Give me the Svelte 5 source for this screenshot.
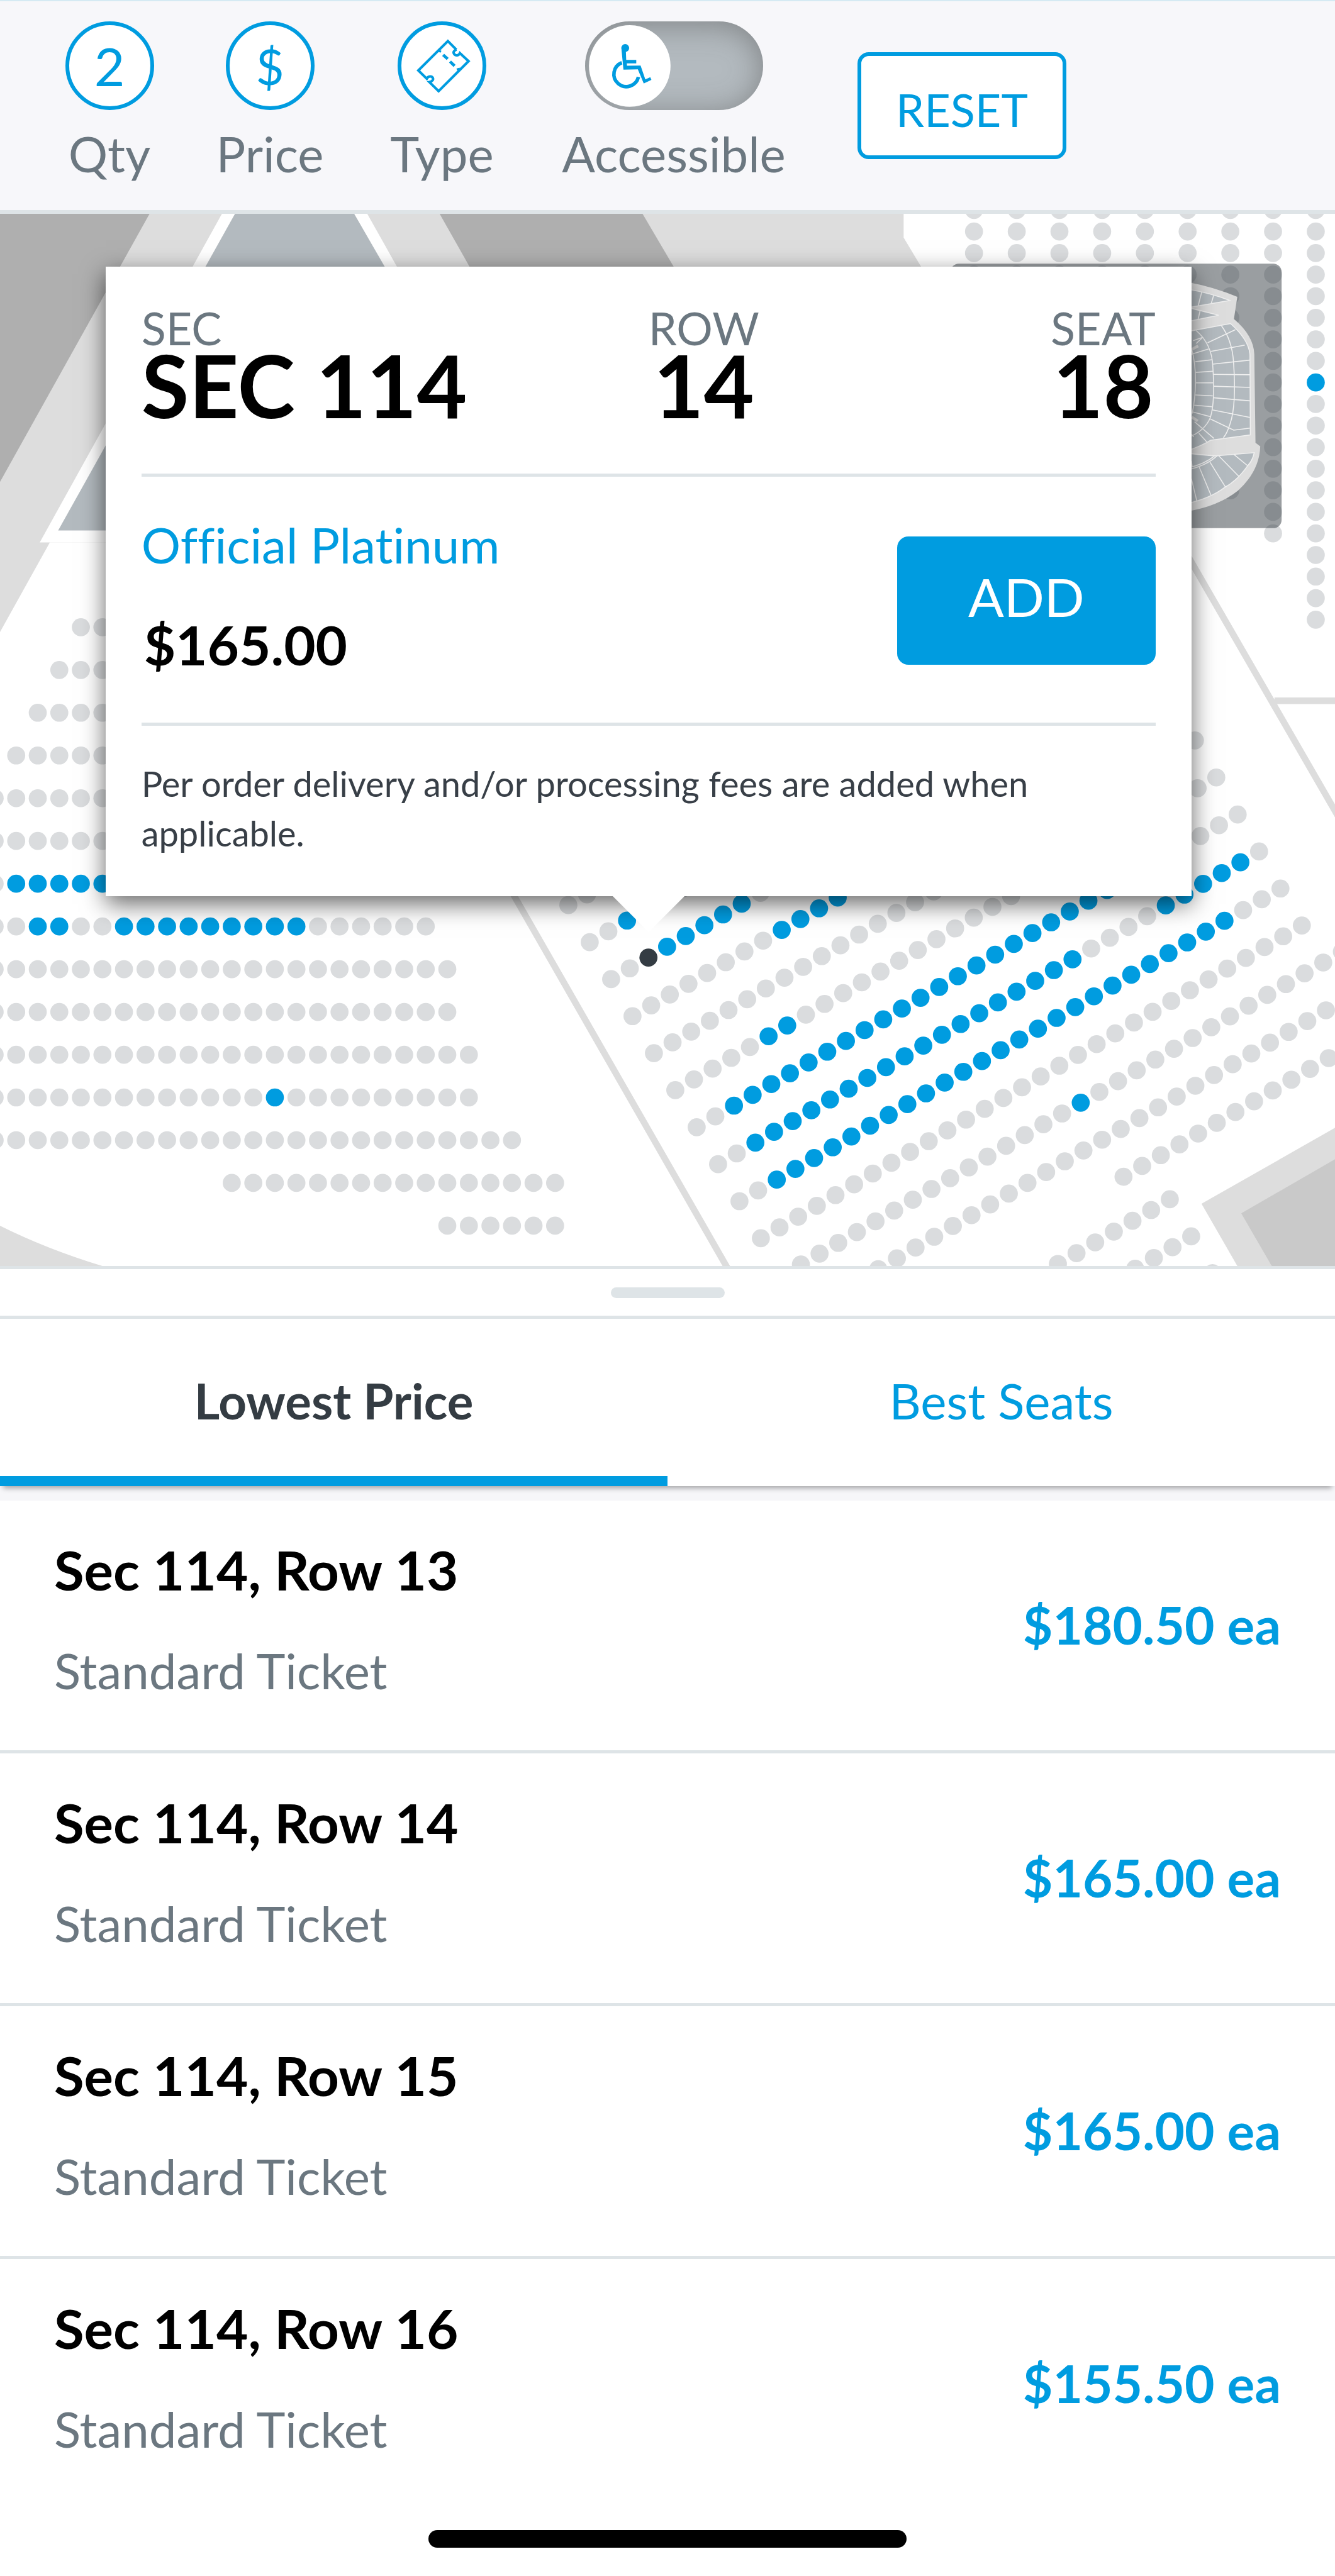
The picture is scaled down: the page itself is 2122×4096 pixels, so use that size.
<script>
  let tab = $state('lowest');
  let accessible = $state(false);

  const tickets = [
    { seat: 'Sec 114, Row 13', kind: 'Standard Ticket', price: '$180.50 ea' },
    { seat: 'Sec 114, Row 14', kind: 'Standard Ticket', price: '$165.00 ea' },
    { seat: 'Sec 114, Row 15', kind: 'Standard Ticket', price: '$165.00 ea' },
    { seat: 'Sec 114, Row 16', kind: 'Standard Ticket', price: '$155.50 ea' }
  ];

  const inRanges = (n, ranges) => ranges.some(([a, b]) => n >= a && n <= b);

  /* One straight row of seats: start point, step, index span and the open seats. */
  function seatRow(x, y, dx, dy, from, to, open = [], picked = null) {
    const out = [];
    for (let n = from; n <= to; n++) {
      const state = n === picked ? 'picked' : inRanges(n, open) ? 'open' : 'taken';
      out.push({ x: x + dx * n, y: y + dy * n, state });
    }
    return out;
  }

  const leftBlock = [
    [3, 6], [2, 6], [1, 6], [0, 6], [-1, 6], [-1, 6],
    [-1, 8, [[0, 8]]],
    [-1, 19, [[1, 2], [5, 13]]],
    [-1, 20], [-1, 20], [-1, 21],
    [-1, 21, [[12, 12]]],
    [-1, 23], [10, 25], [20, 25]
  ].flatMap(([from, to, open], i) => seatRow(27.3, 1057 + 72.07 * i, 36.33, 0, from, to, open));

  const angledBlock = [
    [0, 29],
    [0, 29, [[2, 4]]],
    [0, 29, [[3, 7]], 2],
    [0, 29, [[8, 11]]],
    [0, 29],
    [0, 29, [[5, 6]]],
    [0, 29, [[2, 24]]],
    [0, 29, [[2, 19], [24, 28]]],
    [0, 29, [[2, 26]]],
    [0, 29],
    [0, 30, [[16, 16]]],
    [3, 29],
    [16, 28]
  ].flatMap(([from, to, open, picked], r) =>
    seatRow(957.9 + 36.05 * r, 1525.5 + 62.4 * r, 31.44, -18.18, from, to, open, picked)
  );

  const cornerBlock = [
    ...seatRow(1971.6, 2021.4, -31.44, 18.18, 0, 6),
    ...seatRow(2007.6, 2084, -31.44, 18.18, 0, 3),
    ...seatRow(2043.6, 2146, -31.44, 18.18, 0, 0)
  ];

  const rightBlock = [12, 12, 12, 12, 12, 12, 12, 14, 18].flatMap((last, c) =>
    seatRow(1641.6 + 72 * c, 389.8, 0, 36.36, -1, last, c === 8 ? [[7, 7]] : [])
  );

  const seats = [...leftBlock, ...angledBlock, ...cornerBlock, ...rightBlock];
</script>

<main class="page">
  <header class="filters">
    <button type="button" class="filter">
      <span class="circle">2</span>
      <span class="caption">Qty</span>
    </button>
    <button type="button" class="filter">
      <span class="circle dollar">$</span>
      <span class="caption">Price</span>
    </button>
    <button type="button" class="filter">
      <span class="circle">
        <svg viewBox="49 36 412 412" aria-hidden="true">
          <g fill="none" stroke="currentColor" stroke-width="13">
            <path d="M328 160L285 117L135 266L178 308C186 292 203 294 208 303C213 312 208 321 191 325L238 371L390 219L346 178C340 192 325 192 318 184C311 176 313 166 329 160" />
            <path d="M240 160L240 168L251 170M330 261L341 258L343 266" stroke-width="10" />
            <path d="M261 187L284 208M296 221L319 243" stroke-width="15" />
          </g>
        </svg>
      </span>
      <span class="caption">Type</span>
    </button>
    <label class="filter">
      <span class="switch">
        <input type="checkbox" role="switch" bind:checked={accessible} />
        <svg class="knob" viewBox="36 35 414 415" aria-hidden="true">
          <circle cx="243" cy="242" r="207" fill="#fff" />
          <g fill="#009ce0">
            <circle cx="220" cy="151" r="20" />
            <path d="M201 158L211 261L284 259L314 331L353 313L347 299L322 310L298 240L229 241L228 229H276V211H225L223 160Z" />
          </g>
          <path d="M203 225A63 63 0 1 0 287 298" fill="none" stroke="#009ce0" stroke-width="18" />
        </svg>
      </span>
      <span class="caption">Accessible</span>
    </label>
    <button type="button" class="reset">RESET</button>
  </header>

  <section class="map">
    <svg class="venue" viewBox="0 360 2250 1774" role="img" aria-label="Seat map">
      <path class="floor" d="M0 360H1523V400L1553 450L1800 914H84L0 1065Z" />
      <path class="stand" d="M0 360H252L0 812Z" />
      <path class="stand" d="M741 360H1083L1136 450L1300 730H950Z" />
      <path class="paper" d="M67 914L374 360H619L930 914Z" />
      <path class="suite" d="M98 894L396 360H597L905 894Z" />
      <path class="floor" d="M0 2066Q80 2106 176 2135H0Z" />
      <path class="floor" d="M2250 1901L2025 2029L2086 2135H2250Z" />
      <path class="inner" d="M2250 1954L2092 2045L2144 2135H2250Z" />
      <path class="aisle" d="M1990 916L2260 1384M2148 1181H2250M862 1502L1231 2146" />

      {#each seats as s}
        <circle class={s.state} cx={s.x} cy={s.y} r="15.2" />
      {/each}

      <rect x="1602" y="444" width="558" height="446" rx="14" fill="#31393f" fill-opacity=".49" />
      <g transform="translate(1980 430) scale(.33333)">
        <path class="floor" d="M60 134Q200 160 316 210L299 322Q398 405 402 500L408 948L432 966Q428 1090 320 1190Q220 1270 60 1296Z" />
        <g class="blocks">
          <path d="M60 170Q180 190 278 228L60 266Z" />
          <path d="M60 262L222 303L60 336Z" />
          <path d="M60 386L282 345Q372 425 380 500L382 908L182 935Q140 962 60 990Z" />
          <path d="M60 1000Q160 1012 210 1014L402 998Q392 1040 370 1062Q315 1140 255 1172Q180 1230 60 1256Z" />
          <path class="grid" d="M136 186L118 256M196 204L184 244M128 280L118 322" />
          <path class="grid" d="M108 380Q188 450 192 560Q205 740 180 820Q152 890 60 925M236 356Q290 430 297 540Q312 760 280 850Q265 900 246 922M84 470Q105 540 105 640Q103 730 88 800" />
          <path class="grid" d="M92 432L142 414M84 500L170 474M104 538L188 528M105 592L194 586M106 645H194M104 706L192 711M98 758L188 766M90 792L180 816M100 842L198 926M122 900L162 944M84 905L96 918M142 414L108 446" />
          <path class="grid" d="M166 442L306 376M182 486L354 454M192 550L378 530M196 602L380 604M196 662L380 668M194 720L380 736M190 782L380 820M180 828L298 884L380 874" />
          <path class="grid" d="M60 1086Q160 1065 216 1012M60 1076Q150 1058 204 1012M84 1130L112 1245M124 1072L184 1216M178 1046L256 1172M222 1014L324 1118M298 1006L368 1064M84 1040L88 1070" />
          <path d="M86 476L118 458M86 818L116 838" stroke="#ddd" stroke-width="14" />
        </g>
      </g>
    </svg>

    <article class="offer">
      <dl class="place">
        <div class="first"><dt>SEC</dt><dd>SEC 114</dd></div>
        <div><dt>ROW</dt><dd>14</dd></div>
        <div class="last"><dt>SEAT</dt><dd>18</dd></div>
      </dl>
      <div class="deal">
        <div>
          <p class="tier">Official Platinum</p>
          <p class="cost">$165.00</p>
        </div>
        <button type="button" class="add">ADD</button>
      </div>
      <p class="note">Per order delivery and/or processing fees are added when applicable.</p>
    </article>
  </section>

  <div class="grip"><span></span></div>

  <div class="tabs" role="tablist">
    <button type="button" role="tab" aria-selected={tab === 'lowest'} class:active={tab === 'lowest'} onclick={() => (tab = 'lowest')}>Lowest Price</button>
    <button type="button" role="tab" aria-selected={tab === 'best'} class:active={tab === 'best'} onclick={() => (tab = 'best')}>Best Seats</button>
  </div>

  <ul class="tickets">
    {#each tickets as t}
      <li>
        <div class="info">
          <h2>{t.seat}</h2>
          <p>{t.kind}</p>
        </div>
        <span class="price">{t.price}</span>
      </li>
    {/each}
  </ul>

  <footer class="home"><span></span></footer>
</main>

<style>
  :global(body) {
    margin: 0;
    background: #fff;
  }

  .page {
    display: flex;
    flex-direction: column;
    min-height: 100vh;
    font-family: Lato, 'Open Sans', sans-serif;
    font-size: 78px;
    font-variant-ligatures: none;
    line-height: 92px;
    color: #6b7780;
    overflow: hidden;
  }

  button {
    margin: 0;
    padding: 0;
    border: 0;
    background: none;
    font: inherit;
    font-variant-ligatures: none;
    color: inherit;
    cursor: pointer;
  }

  h2, p, dl, dd, ul {
    margin: 0;
    padding: 0;
  }

  /* Filter bar */
  .filters {
    box-sizing: border-box;
    display: grid;
    grid-template-columns: 240px 270px 277px 460px 1fr;
    height: 340px;
    padding: 32px 62px 0 54px;
    border-top: 2px solid #d5eaf3;
    border-bottom: 6px solid #dee4e7;
    background: #f7f7fa;
  }

  .filter {
    display: flex;
    flex-direction: column;
    align-items: center;
    gap: 23px;
  }

  .circle {
    box-sizing: border-box;
    display: flex;
    align-items: center;
    justify-content: center;
    width: 141px;
    height: 141px;
    border: 6px solid #009ce0;
    border-radius: 50%;
    background: #fff;
    color: #009ce0;
    font-size: 84px;
  }

  .dollar {
    font-size: 78px;
  }

  .circle svg {
    width: 129px;
    height: 129px;
  }

  .switch {
    display: grid;
    width: 283px;
    height: 141px;
  }

  .switch input {
    grid-area: 1 / 1;
    appearance: none;
    width: 100%;
    height: 100%;
    margin: 0;
    border-radius: 71px;
    background: #b3babf;
    box-shadow: inset 0 6px 48px rgba(80, 80, 80, 0.5);
  }

  .knob {
    grid-area: 1 / 1;
    align-self: center;
    width: 130px;
    height: 130px;
    margin: 0 6px;
  }

  .switch input:checked {
    background: #009ce0;
  }

  .switch input:checked + .knob {
    justify-self: end;
  }

  .reset {
    box-sizing: border-box;
    align-self: start;
    width: 332px;
    height: 170px;
    margin: 49px 0 0 62px;
    padding-top: 12px;
    border: 6px solid #009ce0;
    border-radius: 18px;
    background: #fff;
    color: #009ce0;
    font-size: 72px;
  }

  /* Seat map */
  .map {
    position: relative;
  }

  .venue {
    display: block;
    width: 100%;
  }

  .floor { fill: #ddd; }
  .stand { fill: #afafaf; }
  .paper { fill: #fff; }
  .suite { fill: #b3babf; }
  .inner { fill: #c9c9c9; }
  .aisle { fill: none; stroke: #ddd; stroke-width: 11; }
  .taken { fill: #dadcde; }
  .open { fill: #009ce0; }
  .picked { fill: #343c43; }
  .blocks { fill: #b3babf; stroke: #efefef; stroke-width: 5; }
  .grid { fill: none; }

  .offer {
    position: absolute;
    top: 84px;
    left: 7.9%;
    box-sizing: border-box;
    width: 81.35%;
    padding: 57px 57px 61px;
    background: #fff;
    box-shadow: 0 12px 36px rgba(0, 0, 0, 0.6);
  }

  .offer::after {
    content: '';
    position: absolute;
    top: 100%;
    left: 50%;
    margin-left: -57px;
    border: 57px solid transparent;
    border-top-color: #fff;
    border-bottom: 0;
  }

  .place {
    display: grid;
    grid-template-columns: 50% max-content 1fr;
    padding-bottom: 90px;
    border-bottom: 5px solid #dee4e7;
    text-align: center;
  }

  .place .first {
    text-align: left;
  }

  .place .last {
    justify-self: end;
  }

  dt {
    font-size: 72px;
    line-height: 80px;
  }

  dd {
    font-size: 138px;
    font-weight: 700;
    line-height: 102px;
    color: #000;
  }

  .deal {
    display: flex;
    align-items: flex-start;
    justify-content: space-between;
    padding: 62px 0 72px;
    border-bottom: 5px solid #dee4e7;
  }

  .tier {
    color: #009ce0;
  }

  .cost {
    margin-top: 61px;
    padding-left: 4px;
    font-size: 87px;
    font-weight: 700;
    line-height: 104px;
    color: #000;
  }

  .add {
    width: 411px;
    height: 204px;
    margin-top: 33px;
    padding-bottom: 12px;
    border-radius: 18px;
    background: #009ce0;
    color: #fff;
    font-size: 84px;
  }

  .note {
    padding-top: 52px;
    font-size: 56px;
    line-height: 79px;
    color: #383f47;
  }

  /* Sheet */
  .grip {
    display: flex;
    align-items: center;
    justify-content: center;
    height: 74px;
    border-top: 5px solid #dee4e7;
    border-bottom: 5px solid #dee4e7;
  }

  .grip span {
    width: 181px;
    height: 17px;
    border-radius: 9px;
    background: #dee4e7;
  }

  .tabs {
    position: relative;
    display: grid;
    grid-template-columns: 1fr 1fr;
    height: 266px;
    background: #fff;
    box-shadow: 0 8px 8px -5px rgba(0, 0, 0, 0.35);
  }

  .tabs button {
    padding-top: 10px;
    border-bottom: 16px solid transparent;
    color: #009ce0;
  }

  .tabs .active {
    border-bottom-color: #009ce0;
    color: #343c43;
    font-weight: 700;
  }

  .tickets {
    border-top: 23px solid #f6f6f9;
    list-style: none;
  }

  .tickets li {
    box-sizing: border-box;
    display: flex;
    align-items: center;
    justify-content: space-between;
    height: 402px;
    padding: 58px 86px 62px;
    border-bottom: 5px solid #dee4e7;
  }

  .tickets li:last-child {
    border-bottom-color: transparent;
  }

  .info {
    align-self: flex-start;
  }

  .tickets h2 {
    margin-bottom: 62px;
    font-size: 87px;
    font-weight: 700;
    line-height: 104px;
    color: #000;
  }

  .price {
    font-size: 82px;
    font-weight: 700;
    color: #009ce0;
  }

  .home {
    display: flex;
    justify-content: center;
    padding: 29px 0 45px;
  }

  .home span {
    width: 760px;
    height: 28px;
    border-radius: 14px;
    background: #000;
  }
</style>
